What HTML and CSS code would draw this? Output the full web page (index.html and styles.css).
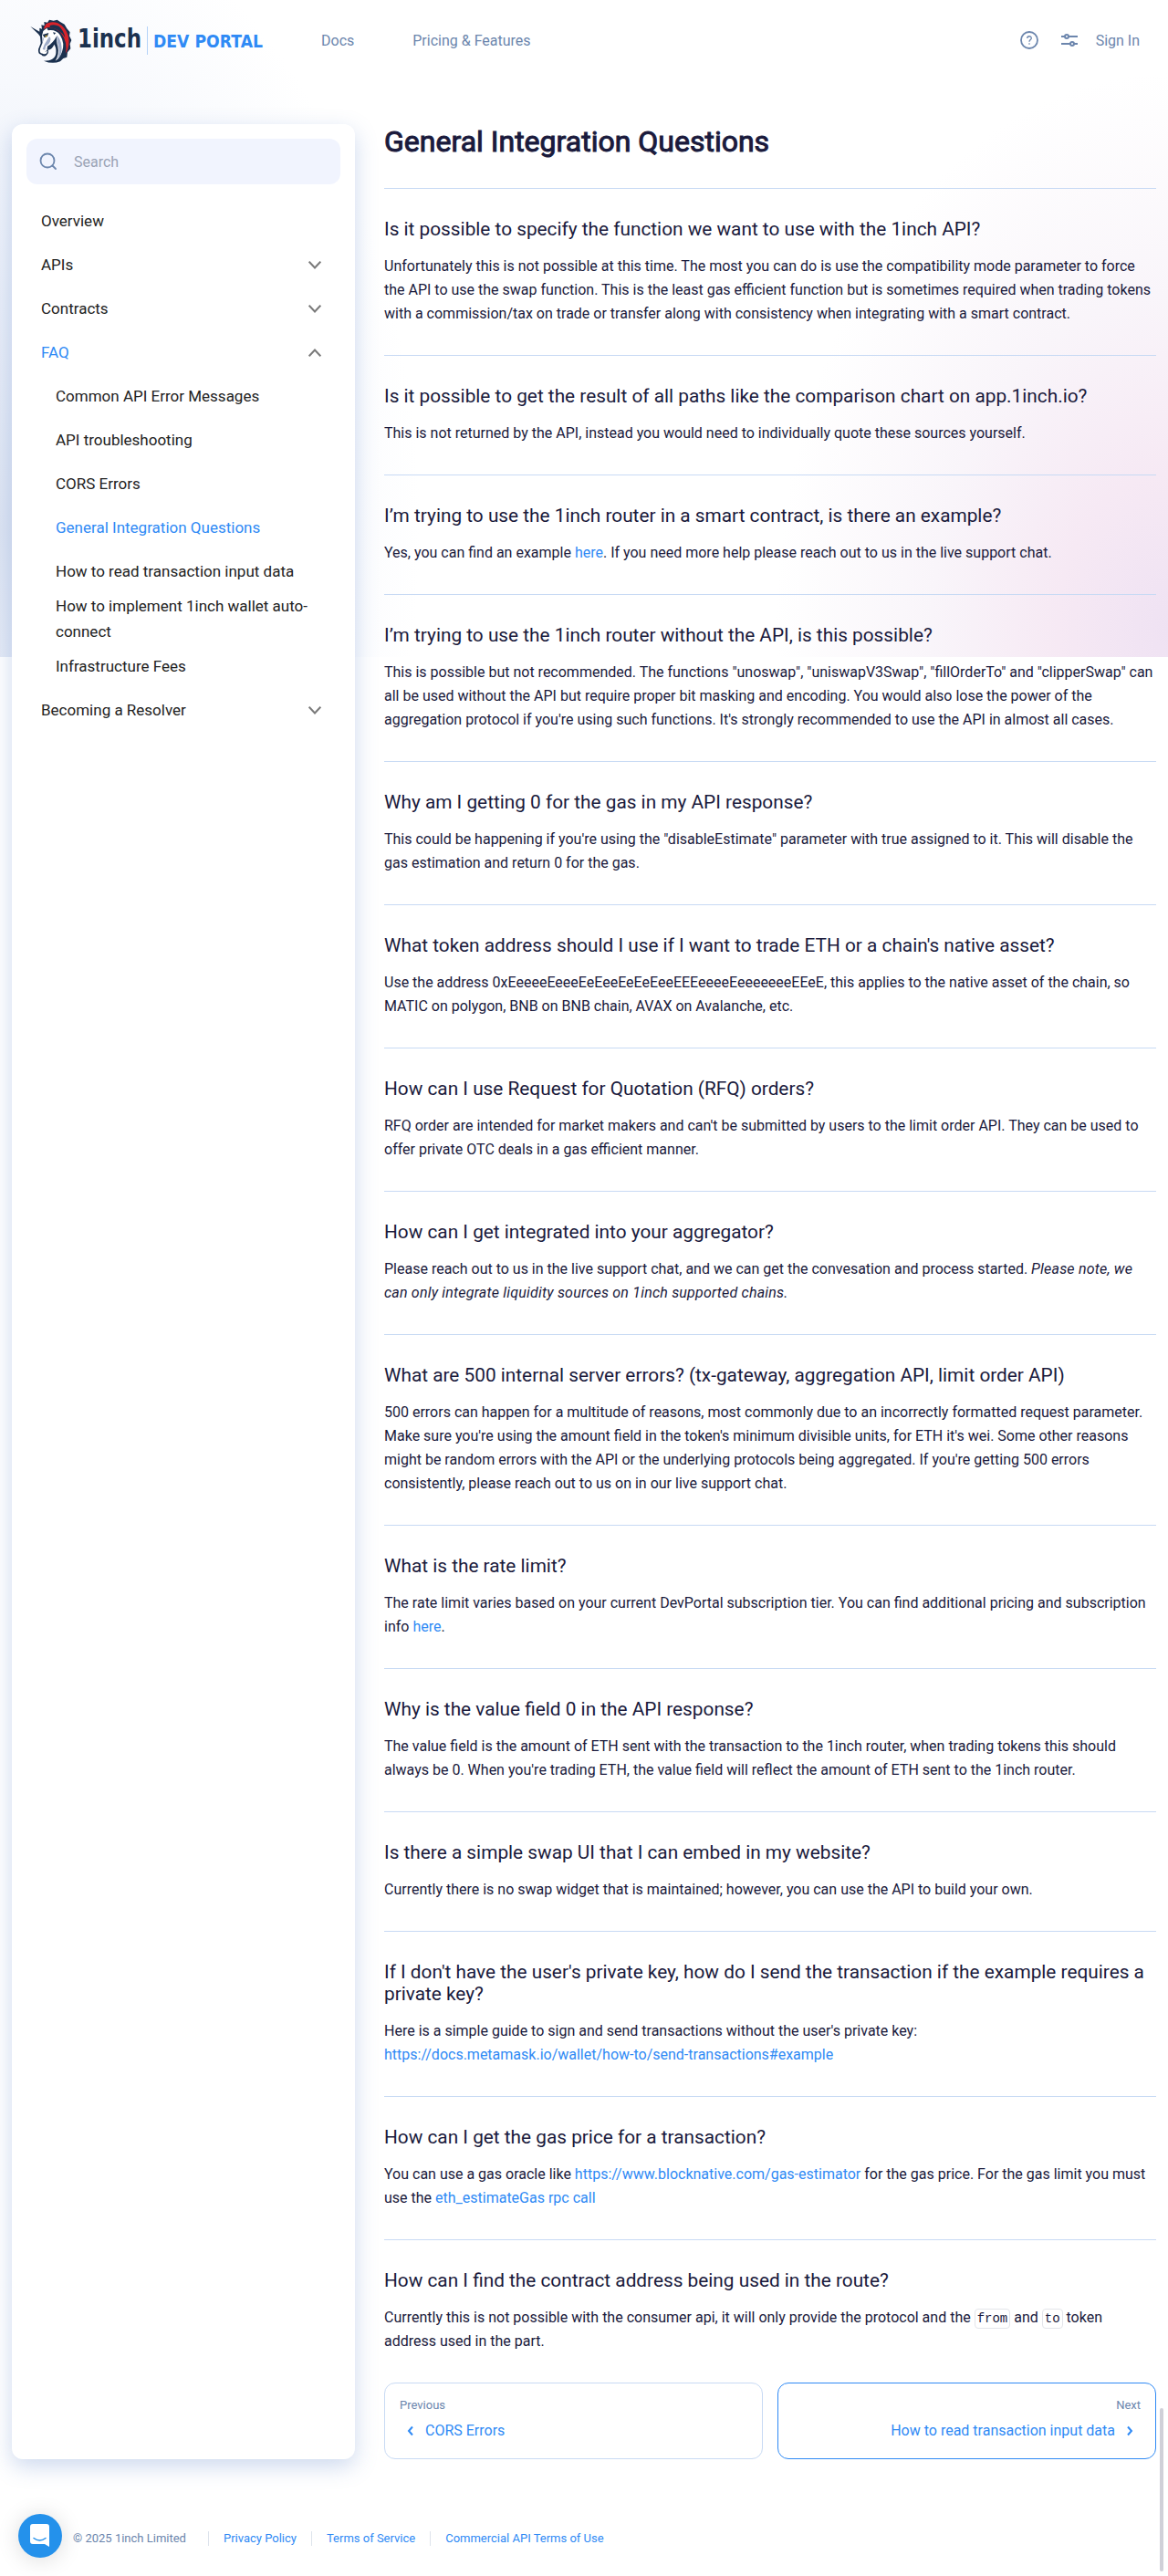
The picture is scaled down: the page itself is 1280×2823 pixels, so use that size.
FILE: index.html
```html
<!DOCTYPE html>
<html lang="en">
<head>
<meta charset="utf-8">
<title>General Integration Questions | 1inch Dev Portal</title>
<link rel="stylesheet" href="styles.css">
</head>
<body>
<div class="page">
<header class="header">
  <a class="logo">
    <svg width="270" height="52" viewBox="0 0 270 52">
      <g transform="scale(.3333)">
        <path fill="#1b314f" d="M10 33L40 50L40 38L48 41L46 28L56 30L55 18L66 20L72 11L86 14L98 11L108 18L122 26L130 40L140 52L138 64L145 78L140 90L142 106L132 118L130 134L118 138L108 148Q82 158 54 146Q92 146 94 120Q96 104 88 92Q82 108 68 110Q72 120 62 128Q52 134 46 126Q34 124 36 108L44 88L42 66L36 58Z"/>
        <path fill="#d8232a" d="M62 24Q80 14 100 22Q124 34 134 62Q142 94 126 122Q132 84 114 60Q96 34 66 36L54 42Q56 30 62 24Z"/>
        <path fill="#1b314f" d="M74 30Q88 24 104 32Q120 46 124 70Q108 40 74 36Z"/>
        <path fill="#fff" d="M52 48L64 38L68 46Q94 42 108 62Q124 88 114 116Q106 138 92 146Q106 124 100 98Q94 82 98 62Q84 88 66 98Q64 106 66 116Q60 128 50 122Q38 122 42 106L50 86L48 64Z"/>
        <path fill="#9fadc9" d="M98 62Q116 84 112 116Q108 134 98 142Q108 118 102 98Q96 80 98 62ZM72 66Q82 74 70 90L60 98L58 110L50 108L56 92ZM50 66L54 74L48 92L44 104L50 84Z"/>
        <path fill="#1b314f" d="M50 60L70 54L66 66L56 70ZM58 116L66 110L66 114ZM84 52L94 54L88 60Z"/>
        <path fill="#f5c021" d="M57 65L66 61L62 68Z"/>
      </g>
      <text class="logo-name" x="55" y="34" textLength="70" lengthAdjust="spacingAndGlyphs">1inch</text>
      <path stroke="#b5d3f8" d="M131.500 11V42"/>
      <text class="logo-sub" x="138" y="34" textLength="120" lengthAdjust="spacingAndGlyphs">DEV PORTAL</text>
    </svg>
  </a>
  <nav class="topnav"><a>Docs</a><a>Pricing &amp; Features</a></nav>
  <div class="actions">
    <svg class="help" width="20" height="20" viewBox="0 0 20 20" fill="none" stroke="#6c86ad" stroke-width="1.800"><circle cx="10" cy="10" r="9"/><path stroke-width="1.300" d="M7.700 8C7.700 5 12.300 5 12.300 7.900C12.300 9.500 10 9.700 10 11.800M10 13.300V14.700"/></svg>
    <svg class="tune" width="18" height="14" viewBox="0 0 18 14" fill="none" stroke="#6c86ad" stroke-width="2"><path d="M0 3H4M8 3H18M0 11H10M14 11H18"/><circle cx="6" cy="3" r="2"/><circle cx="12" cy="11" r="2"/></svg>
    <a>Sign In</a>
  </div>
</header>
<div class="layout">
  <aside class="sidebar">
    <div class="search"><svg width="20" height="20" viewBox="0 0 20 20" fill="none" stroke="#6c86ad" stroke-width="1.800" stroke-linecap="round"><circle cx="9" cy="9" r="7.500"/><path d="M14.500 14.500L18 18"/></svg><span>Search</span></div>
    <ul class="menu">
      <li>Overview</li>
      <li>APIs<svg class="chev" width="14" height="9" viewBox="0 0 14 9"><path d="M.7 .7L7 7.500L13.300 .7"/></svg></li>
      <li>Contracts<svg class="chev" width="14" height="9" viewBox="0 0 14 9"><path d="M.7 .7L7 7.500L13.300 .7"/></svg></li>
      <li class="active">FAQ<svg class="chev" width="14" height="9" viewBox="0 0 14 9"><path d="M.7 8.300L7 1.500L13.300 8.300"/></svg></li>
      <li class="sub">Common API Error Messages</li>
      <li class="sub">API troubleshooting</li>
      <li class="sub">CORS Errors</li>
      <li class="sub active">General Integration Questions</li>
      <li class="sub">How to read transaction input data</li>
      <li class="sub">How to implement 1inch wallet auto-connect</li>
      <li class="sub">Infrastructure Fees</li>
      <li>Becoming a Resolver<svg class="chev" width="14" height="9" viewBox="0 0 14 9"><path d="M.7 .7L7 7.500L13.300 .7"/></svg></li>
    </ul>
  </aside>
  <main class="article">
    <h1>General Integration Questions</h1>
    <hr>
    <h3>Is it possible to specify the function we want to use with the 1inch API?</h3>
    <p>Unfortunately this is not possible at this time. The most you can do is use the compatibility mode parameter to force the API to use the swap function. This is the least gas efficient function but is sometimes required when trading tokens with a commission/tax on trade or transfer along with consistency when integrating with a smart contract.</p>
    <hr>
    <h3>Is it possible to get the result of all paths like the comparison chart on app.1inch.io?</h3>
    <p>This is not returned by the API, instead you would need to individually quote these sources yourself.</p>
    <hr>
    <h3>I’m trying to use the 1inch router in a smart contract, is there an example?</h3>
    <p>Yes, you can find an example <a>here</a>. If you need more help please reach out to us in the live support chat.</p>
    <hr>
    <h3>I’m trying to use the 1inch router without the API, is this possible?</h3>
    <p>This is possible but not recommended. The functions "unoswap", "uniswapV3Swap", "fillOrderTo" and "clipperSwap" can all be used without the API but require proper bit masking and encoding. You would also lose the power of the aggregation protocol if you're using such functions. It's strongly recommended to use the API in almost all cases.</p>
    <hr>
    <h3>Why am I getting 0 for the gas in my API response?</h3>
    <p>This could be happening if you're using the "disableEstimate" parameter with true assigned to it. This will disable the gas estimation and return 0 for the gas.</p>
    <hr>
    <h3>What token address should I use if I want to trade ETH or a chain's native asset?</h3>
    <p>Use the address 0xEeeeeEeeeEeEeeEeEeEeeEEEeeeeEeeeeeeeEEeE, this applies to the native asset of the chain, so MATIC on polygon, BNB on BNB chain, AVAX on Avalanche, etc.</p>
    <hr>
    <h3>How can I use Request for Quotation (RFQ) orders?</h3>
    <p>RFQ order are intended for market makers and can't be submitted by users to the limit order API. They can be used to offer private OTC deals in a gas efficient manner.</p>
    <hr>
    <h3>How can I get integrated into your aggregator?</h3>
    <p>Please reach out to us in the live support chat, and we can get the convesation and process started. <em>Please note, we can only integrate liquidity sources on 1inch supported chains.</em></p>
    <hr>
    <h3>What are 500 internal server errors? (tx-gateway, aggregation API, limit order API)</h3>
    <p>500 errors can happen for a multitude of reasons, most commonly due to an incorrectly formatted request parameter. Make sure you're using the amount field in the token's minimum divisible units, for ETH it's wei. Some other reasons might be random errors with the API or the underlying protocols being aggregated. If you're getting 500 errors consistently, please reach out to us on in our live support chat.</p>
    <hr>
    <h3>What is the rate limit?</h3>
    <p>The rate limit varies based on your current DevPortal subscription tier. You can find additional pricing and subscription info <a>here</a>.</p>
    <hr>
    <h3>Why is the value field 0 in the API response?</h3>
    <p>The value field is the amount of ETH sent with the transaction to the 1inch router, when trading tokens this should always be 0. When you're trading ETH, the value field will reflect the amount of ETH sent to the 1inch router.</p>
    <hr>
    <h3>Is there a simple swap UI that I can embed in my website?</h3>
    <p>Currently there is no swap widget that is maintained; however, you can use the API to build your own.</p>
    <hr>
    <h3>If I don't have the user's private key, how do I send the transaction if the example requires a private key?</h3>
    <p>Here is a simple guide to sign and send transactions without the user's private key:<br><a>https://docs.metamask.io/wallet/how-to/send-transactions#example</a></p>
    <hr>
    <h3>How can I get the gas price for a transaction?</h3>
    <p>You can use a gas oracle like <a>https://www.blocknative.com/gas-estimator</a> for the gas price. For the gas limit you must use the <a>eth_estimateGas rpc call</a></p>
    <hr>
    <h3>How can I find the contract address being used in the route?</h3>
    <p>Currently this is not possible with the consumer api, it will only provide the protocol and the <code>from</code> and <code>to</code> token address used in the part.</p>
    <div class="pager">
      <a class="card"><small>Previous</small><span><svg width="8" height="12" viewBox="0 0 8 12"><path d="M6 1.500L2 6L6 10.500"/></svg>CORS Errors</span></a>
      <a class="card next"><small>Next</small><span>How to read transaction input data<svg width="8" height="12" viewBox="0 0 8 12"><path d="M2 1.500L6 6L2 10.500"/></svg></span></a>
    </div>
  </main>
</div>
<footer class="footer"><span>© 2025 1inch Limited</span><a>Privacy Policy</a><a>Terms of Service</a><a>Commercial API Terms of Use</a></footer>
<div class="chat"><svg width="24" height="26" viewBox="0 0 24 26"><path fill="#fff" d="M4 0H19Q22 0 22 3V25L17 22H4Q1 22 1 19V3Q1 0 4 0Z"/><path fill="none" stroke="#2491eb" stroke-width="1.500" stroke-linecap="round" d="M5 15.500Q11.500 20.500 18 15.500"/></svg></div>
<div class="scrollbar"></div>
</div>
</body>
</html>
```
FILE: styles.css
```css
* { box-sizing: border-box; }
body { margin: 0; background: #fff; font-family: Roboto, sans-serif; font-size: 16px; color: #1a1a3c; }
a { color: #2f8af5; text-decoration: none; }
.page {
  position: relative; height: 2823px; overflow: hidden;
  background:
    radial-gradient(ellipse 460px 700px at 0 580px, #dde4f2 0%, #e9eef8 35%, #f7f9fd 70%, rgba(255,255,255,0) 100%) 0 0 / 640px 720px no-repeat,
    radial-gradient(ellipse 430px 610px at 100% 690px, #efe2f3 0%, #f6e9f4 28%, #f9f5fa 60%, rgba(255,255,255,0) 100%) 640px 0 / 640px 720px no-repeat,
    #fff;
}
.header { display: flex; align-items: center; height: 136px; padding: 0 31px 48px 30px; }
.header a { color: #6c86ad; }
.logo { display: flex; width: 322px; }
.logo svg { overflow: visible; }
.logo-name { font: 700 29px "DejaVu Sans", sans-serif; fill: #1b314f; }
.logo-sub { font: 700 19px "DejaVu Sans", sans-serif; fill: #2f8af5; }
.topnav { display: flex; gap: 64px; }
.actions { display: flex; align-items: center; margin-left: auto; }
.tune { margin: 0 20px 0 25px; }
.layout { display: flex; gap: 32px; height: 2559px; padding: 0 13px; }
.sidebar { width: 376px; padding: 16px; border-radius: 12px; background: #fff; box-shadow: 0 8px 24px rgba(90,130,200,.3); }
.search { display: flex; align-items: center; gap: 18px; height: 50px; padding: 0 14px; border-radius: 12px; background: #f1f4fe; color: #9aa3b5; }
.menu { list-style: none; margin: 16px 0 0; padding: 0 16px; font-size: 17px; line-height: 28px; color: #222; }
.menu li { display: flex; align-items: center; justify-content: space-between; min-height: 48px; padding-right: 5px; }
.menu li.sub { padding: 0 16px; }
.menu li.active { color: #2f8af5; }
.chev { fill: none; stroke: #7a7a7a; stroke-width: 2; }
.article { width: 846px; }
h1 { margin: 0 0 32px; font-size: 32px; line-height: 38px; font-weight: 400; -webkit-text-stroke: 1px currentColor; }
hr { margin: 32px 0; border: 0; height: 1px; background: #c8daf4; }
h3 { margin: 0 0 16px; font-size: 20.800px; line-height: 24px; font-weight: 400; }
p { margin: 0; line-height: 26px; }
em { letter-spacing: .2px; }
code { padding: 2px; border: 1px solid #e3e5ea; border-radius: 4px; font: 14px "Liberation Mono", monospace; }
.pager { display: flex; gap: 16px; margin-top: 32px; }
.card { flex: 1; height: 84px; padding: 16px; border: 1px solid #c8daf4; border-radius: 12px; }
.card small { display: block; font-size: 13px; line-height: 16px; color: #6c86ad; }
.card span { display: flex; align-items: center; gap: 12px; padding: 0 8px; margin-top: 8px; line-height: 24px; }
.card path { fill: none; stroke: #2f8af5; stroke-width: 2; }
.next { border-color: #2f8af5; text-align: right; }
.next span { justify-content: flex-end; }
.footer { display: flex; align-items: center; margin-top: 79px; padding-left: 80px; font-size: 13px; line-height: 16px; color: #6c86ad; }
.footer a { padding-left: 16px; margin-left: 16px; border-left: 1px solid #dde3ec; }
.footer span { margin-right: 8px; }
.chat { position: absolute; left: 20px; top: 2755px; display: flex; align-items: center; justify-content: center; width: 48px; height: 48px; border-radius: 50%; background: #2491eb; box-shadow: 0 2px 24px rgba(0,0,0,.15); }
.scrollbar { position: absolute; left: 1271px; top: 2639px; width: 4px; height: 179px; border-radius: 2px; background: #d0d0d8; }
```
